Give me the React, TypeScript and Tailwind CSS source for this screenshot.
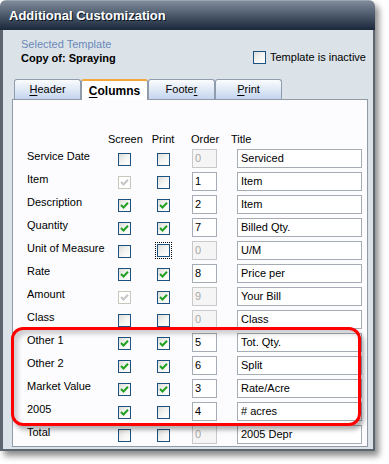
import React from "react";

type Row = {
  label: string;
  screen: "off" | "on" | "dis";
  print: "off" | "on" | "focus";
  order: string;
  orderDisabled?: boolean;
  title: string;
};

const ROWS: Row[] = [
  { label: "Service Date", screen: "off", print: "off", order: "0", orderDisabled: true, title: "Serviced" },
  { label: "Item", screen: "dis", print: "off", order: "1", title: "Item" },
  { label: "Description", screen: "on", print: "on", order: "2", title: "Item" },
  { label: "Quantity", screen: "on", print: "on", order: "7", title: "Billed Qty." },
  { label: "Unit of Measure", screen: "off", print: "focus", order: "0", orderDisabled: true, title: "U/M" },
  { label: "Rate", screen: "on", print: "on", order: "8", title: "Price per" },
  { label: "Amount", screen: "dis", print: "on", order: "9", orderDisabled: true, title: "Your Bill" },
  { label: "Class", screen: "off", print: "off", order: "0", orderDisabled: true, title: "Class" },
  { label: "Other 1", screen: "on", print: "on", order: "5", title: "Tot. Qty." },
  { label: "Other 2", screen: "on", print: "on", order: "6", title: "Split" },
  { label: "Market Value", screen: "on", print: "on", order: "3", title: "Rate/Acre" },
  { label: "2005", screen: "on", print: "off", order: "4", title: "# acres" },
  { label: "Total", screen: "off", print: "off", order: "0", orderDisabled: true, title: "2005 Depr" },
];

function Check({ color }: { color: string }) {
  return (
    <svg width="9" height="9" viewBox="0 0 9 9">
      <path d="M1 4 L3.5 6.5 L8 1.8" fill="none" stroke={color} strokeWidth="2" />
    </svg>
  );
}

function Box({ state }: { state: "off" | "on" | "dis" | "focus" }) {
  const disabled = state === "dis";
  const box = (
    <div
      className={`w-[13px] h-[13px] flex items-center justify-center border ${
        disabled
          ? "border-[#c9c7ba] bg-white"
          : "border-[#1c5180] bg-gradient-to-br from-[#dcdcd7] via-[#f4f4f2] to-white"
      }`}
    >
      {state === "on" && <Check color="#21a121" />}
      {disabled && <Check color="#c6c6c6" />}
    </div>
  );
  if (state === "focus") {
    return <div className="p-px outline outline-1 outline-dotted outline-black -outline-offset-0">{box}</div>;
  }
  return box;
}

function Tab({ label, u, active }: { label: string; u: number; active?: boolean }) {
  const text = (
    <span>
      {label.slice(0, u)}
      <span className="underline underline-offset-2">{label[u]}</span>
      {label.slice(u + 1)}
    </span>
  );
  if (active) {
    return (
      <div className="relative z-10 w-[67px] h-[21px] -mb-px flex items-center justify-center bg-white border-x border-[#919ba8] border-t-2 border-t-[#f3a83b] rounded-t-[3px] font-bold text-[12px] text-black">
        {text}
      </div>
    );
  }
  return (
    <div className="w-[67px] h-[20px] flex items-center justify-center border border-b-0 border-[#8e9cae] rounded-t-[3px] bg-gradient-to-b from-[#fbfcfd] to-[#c4d5ee] text-[11px] text-black">
      {text}
    </div>
  );
}

export default function App() {
  return (
    <div className="w-[389px] h-[464px] bg-white" style={{ fontFamily: '"Liberation Sans", Arial, sans-serif' }}>
      <div className="w-[375px] h-[451px] flex flex-col rounded-t-[6px] overflow-hidden shadow-[4px_5px_6px_rgba(0,0,0,0.45)]">
        {/* title bar */}
        <div className="h-[30px] shrink-0 flex items-center pl-[9px] bg-gradient-to-b from-[#808c9a] via-[#4a586a] to-[#1b283b] border-t border-[#9aa5b1]">
          <span className="text-white font-bold text-[13px] [text-shadow:1px_1px_0_#0b1420]">Additional Customization</span>
        </div>

        {/* body */}
        <div className="flex-1 flex flex-col bg-[#dbe3e8] border-l-[3px] border-r-[2px] border-b-[2px] border-[#5c6570] pl-[9px] pr-[5px] pb-[2px]">
          <div className="h-[49px] shrink-0 flex text-[11px] leading-[13px]">
            <div className="w-[241px] pl-[9px] pt-[8px]">
              <div className="text-[#6c88b8]">Selected Template</div>
              <div className="font-bold text-black mt-px">Copy of: Spraying</div>
            </div>
            <div className="mt-[21px] flex items-center gap-[4px] h-[13px]">
              <div className="w-[13px] h-[13px] border border-[#1c5180] bg-gradient-to-br from-[#dcdcd7] via-[#f4f4f2] to-white" />
              <span className="text-black">Template is inactive</span>
            </div>
          </div>

          <div className="flex items-end pl-[2px] h-[20px] shrink-0">
            <Tab label="Header" u={0} />
            <Tab label="Columns" u={0} active />
            <Tab label="Footer" u={5} />
            <Tab label="Print" u={0} />
          </div>

          <div className="relative flex-1 bg-[#fcfcfe] border border-[#919ba8] pt-[33px] pl-[14px] text-[11px] leading-[13px] text-black">
            <div className="flex h-[13px] mb-[3px]">
              <div className="w-[81px]" />
              <div className="w-[33px] text-center">Screen</div>
              <div className="w-[44px] text-center">Print</div>
              <div className="w-[45px] pl-[6px]">Order</div>
              <div className="pl-[1px]">Title</div>
            </div>

            <div className="flex flex-col gap-[4px]">
              {ROWS.map((r) => (
                <div key={r.label} className="flex h-[19px]">
                  <div className="w-[81px] pt-px">{r.label}</div>
                  <div className="w-[33px] flex justify-center pt-[4px]">
                    <Box state={r.screen} />
                  </div>
                  <div className="w-[44px] flex justify-center pt-[4px]">
                    {r.print === "focus" ? (
                      <div className="-mt-[2px]">
                        <Box state="focus" />
                      </div>
                    ) : (
                      <Box state={r.print} />
                    )}
                  </div>
                  <div
                    className={`ml-[7px] w-[25px] h-[19px] flex items-center px-[2px] border ${
                      r.orderDisabled
                        ? "border-[#c9c9c9] bg-[#f5f5f5] text-[#a8a8a8]"
                        : "border-[#a5acb5] bg-white text-black"
                    }`}
                  >
                    {r.order}
                  </div>
                  <div className="ml-[20px] w-[125px] h-[19px] flex items-center px-[3px] border border-[#a5acb5] bg-white">
                    {r.title}
                  </div>
                </div>
              ))}
            </div>

            {/* highlight */}
            <div className="absolute left-[-2px] top-[227px] w-[350px] h-[99px] border-[3px] border-[#ff0000] rounded-[12px] shadow-[3px_4px_4px_rgba(0,0,0,0.3),inset_4px_4px_4px_rgba(0,0,0,0.18)] pointer-events-none" />
          </div>
        </div>
      </div>
    </div>
  );
}
